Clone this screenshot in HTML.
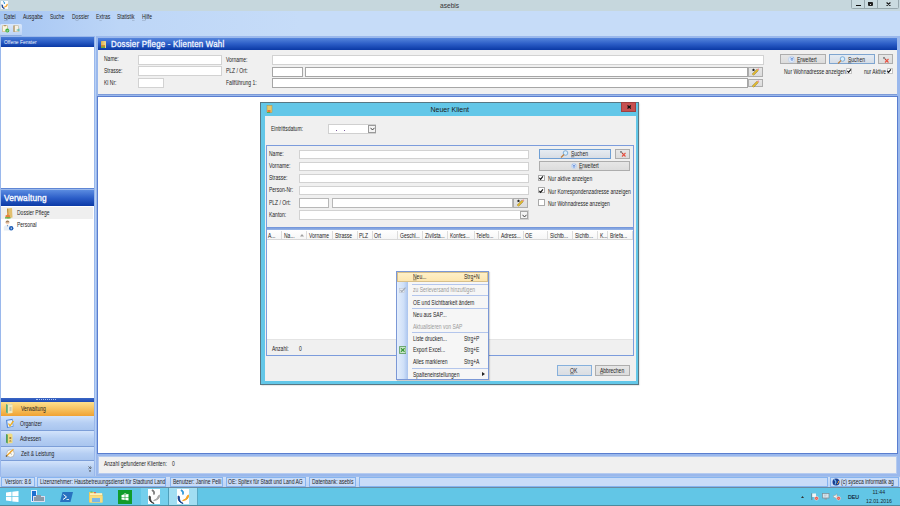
<!DOCTYPE html>
<html><head><meta charset="utf-8">
<style>
*{box-sizing:border-box}
html,body{margin:0;padding:0;width:900px;height:506px;overflow:hidden;background:#fff;font-family:"Liberation Sans",sans-serif;}
.a{position:absolute}
.t{position:absolute;font-size:6.6px;color:#1e1e1e;white-space:nowrap;line-height:1;transform:translateY(-0.7px) scaleX(0.758);transform-origin:0 0}
.s{transform:none}

u{text-decoration-thickness:1px;text-underline-offset:-0.2px;text-decoration-color:rgba(20,20,20,0.45)}
.ck{position:absolute}
.inp{position:absolute;background:#fff;border:1px solid #d2d2d2}
.btn{position:absolute;background:linear-gradient(#e6e6e6,#dcdcdc);border:1px solid #adadad}
.nb{position:absolute;left:1px;width:92.5px;background:linear-gradient(#d2e3fb,#b6cff3 50%,#a9c5ef);border-bottom:1px solid #7c9ed8}
.seg{position:absolute;top:477px;height:9.5px;background:#c9dcf8;border:1px solid #86b4f0}
.chk{position:absolute;width:6px;height:6px;background:#fff;border:1px solid #a9a9a9;border-radius:0.5px}
</style></head><body>
<!-- title bar -->
<div class="a" style="left:0;top:0;width:900px;height:11px;background:#c6d7dd"></div>
<div class="a" style="left:1px;top:1px;width:7px;height:8px;background:#fbfbfb"></div><svg class="a" style="left:1px;top:1px" width="7" height="8" viewBox="0 0 12 15"><path d="M4.3 0.8 Q7.2 2 5.8 5.6 Q6.2 2.8 3.8 1.6Z" fill="#1e8fd8" stroke="#1e8fd8" stroke-width="1.2" stroke-linejoin="round"/><path d="M11.6 6 Q11.5 11.2 5.4 11.6 Q9.5 10.4 10.3 6.6Z" fill="#f5a020" stroke="#f5a020" stroke-width="1.2" stroke-linejoin="round"/><path d="M1 7 Q0.2 13.3 6 14.5 Q1.8 12.6 2.2 7.6Z" fill="#123c8c" stroke="#123c8c" stroke-width="1.2" stroke-linejoin="round"/></svg>
<div class="t s" style="left:440px;top:2.5px;font-size:6.6px;color:#333">asebis</div>
<div class="a" style="left:851.2px;top:-1px;width:47.7px;height:9.8px;background:#cadbe0;border:1px solid #97a8ae;border-radius:0 0 1.5px 1.5px"></div>
<div class="a" style="left:864.2px;top:0;width:0.8px;height:8.5px;background:#97a8ae"></div>
<div class="a" style="left:877.2px;top:0;width:0.8px;height:8.5px;background:#97a8ae"></div>
<div class="a" style="left:856px;top:4.8px;width:4.7px;height:1.4px;background:#111"></div>
<div class="a" style="left:868px;top:2.3px;width:5px;height:4.2px;background:#222;border-radius:0 1px 1px 1px"></div>
<div class="a" style="left:870px;top:4px;width:1px;height:1px;background:#ddd"></div>
<svg class="a" style="left:885.8px;top:1.9px" width="5" height="4.4" viewBox="0 0 5 4.4"><path d="M0.6 0.5 L4.4 3.9 M4.4 0.5 L0.6 3.9" stroke="#111" stroke-width="1.1"/></svg>
<!-- menubar + toolbar -->
<div class="a" style="left:0;top:11px;width:900px;height:25px;background:linear-gradient(90deg,#a5c5f3 0,#bdd6f7 120px,#c6dcf8 300px,#c6dcf8)"></div>
<div class="t" style="left:4px;top:14.5px"><u>D</u>atei</div>
<div class="t" style="left:23px;top:14.5px">Ausgabe</div>
<div class="t" style="left:50px;top:14.5px">Suche</div>
<div class="t" style="left:72px;top:14.5px">D<u>o</u>ssier</div>
<div class="t" style="left:96px;top:14.5px">E<u>x</u>tras</div>
<div class="t" style="left:117px;top:14.5px">Statisti<u>k</u></div>
<div class="t" style="left:142px;top:14.5px"><u>H</u>ilfe</div>
<div class="a" style="left:0;top:23.5px;width:22px;height:12px;background:linear-gradient(#dce9fb,#bcd3f5);border-radius:1.5px;border-bottom:1px solid #8eaee0"></div>
<svg class="a" style="left:1.5px;top:25px" width="8" height="8" viewBox="0 0 8 8"><rect x="0.7" y="0.7" width="4.6" height="6" fill="#fbf6e0" stroke="#d0b070" stroke-width="0.6"/><rect x="2" y="0.2" width="2" height="1" fill="#b09060"/><circle cx="5.3" cy="5.6" r="2" fill="#40b040"/><path d="M4.3 5.6 L5.1 6.4 L6.3 4.9" stroke="#fff" stroke-width="0.6" fill="none"/></svg><svg class="a" style="left:12.5px;top:25px" width="8" height="8" viewBox="0 0 8 8"><rect x="0.7" y="0.7" width="4.6" height="6" fill="#f6f2e6" stroke="#c8b890" stroke-width="0.6"/><rect x="0.6" y="0.6" width="1" height="6.2" fill="#a08050"/><path d="M3 5 L6.5 3.5 L6.5 6.5Z" fill="#70c0b0"/></svg>

<!-- left panel -->
<div class="a" style="left:0;top:35.5px;width:94px;height:441px;background:#9ab8ec"></div>
<div class="a" style="left:1px;top:36.5px;width:92.5px;height:10.5px;background:linear-gradient(#4a7cd6,#2a5cc4 50%,#0a39a5)"></div>
<div class="t s" style="left:4px;top:40.9px;color:#f4f7ff;font-size:4.9px">Offene Fenster</div>
<div class="a" style="left:1px;top:47px;width:92.5px;height:140.5px;background:#fff"></div>
<div class="a" style="left:1px;top:187.5px;width:92.5px;height:1px;background:#5f86d4"></div>
<div class="a" style="left:1px;top:190px;width:92.5px;height:15.5px;background:linear-gradient(#5a8be0,#2c5ec8 50%,#0b3aa6)"></div>
<div class="t s" style="left:3.8px;top:193.5px;color:#f4f7ff;font-size:9.2px;font-weight:normal;-webkit-text-stroke:0.4px #f4f7ff;letter-spacing:0.2px;transform:scaleX(0.9);transform-origin:0 0">Verwaltung</div>
<div class="a" style="left:1px;top:205.5px;width:92.5px;height:192.5px;background:#fff"></div>
<div class="a" style="left:1px;top:207px;width:91.5px;height:11.5px;background:#efefef"></div>
<svg class="a" style="left:3.5px;top:207.5px" width="9" height="11" viewBox="0 0 9 11"><path d="M3 0.5 L8 0 L8.5 9.5 L3.5 10.5Z" fill="#e2c070"/><path d="M3 0.5 L4.2 1 L4.5 10.3 L3.5 10.5Z" fill="#b89040"/><circle cx="4" cy="5.5" r="1" fill="#f0a050"/><path d="M1.5 9.5 L1.5 7.5 Q4 6 6 7.5 L6 9.5Z" fill="#e8803a"/><path d="M1 9.3 L6.5 9.3 L6.5 10.5 L1 10.5Z" fill="#50b040"/></svg>
<div class="t" style="left:17px;top:210.5px">Dossier Pflege</div>
<svg class="a" style="left:2.5px;top:219.5px" width="11" height="11" viewBox="0 0 11 11"><circle cx="4.5" cy="2.6" r="2" fill="#f3d2b8"/><path d="M4.5 0.6 Q2.5 0.8 2.6 2.4 L6.4 2.2 Q6.4 0.7 4.5 0.6Z" fill="#a08060"/><path d="M0.8 10.5 L0.8 7.5 Q1 5 4.5 5 Q8 5 8 7.5 L8 10.5Z" fill="#e6edf5"/><path d="M4 5 L4.5 7 L5 5Z" fill="#5080c0"/><circle cx="8.2" cy="8.3" r="2.2" fill="#1a5cb8"/><rect x="7.8" y="7.5" width="0.8" height="1.8" fill="#fff"/></svg>
<div class="t" style="left:17px;top:222.5px">Personal</div>
<div class="a" style="left:1px;top:398px;width:92.5px;height:3.5px;background:linear-gradient(#3b66c4,#1c48b4)"></div>
<div class="a" style="left:36px;top:398.5px;width:20px;height:1px;border-top:1px dotted #a9c0ee"></div>
<div class="nb" style="top:401.5px;height:15px;background:linear-gradient(#fde08e,#f6c260 50%,#f0a232)"></div>
<div class="t" style="left:20.5px;top:406.5px">Verwaltung</div>
<div class="nb" style="top:416px;height:15px"></div>
<div class="t" style="left:20px;top:421.5px">Organizer</div>
<div class="nb" style="top:431px;height:15.5px"></div>
<div class="t" style="left:20px;top:436.5px">Adressen</div>
<div class="nb" style="top:446.5px;height:14.5px"></div>
<div class="t" style="left:20.5px;top:451.5px">Zeit &amp; Leistung</div>
<div class="nb" style="top:461px;height:14.5px;border-bottom:none"></div>
<svg class="a" style="left:87.5px;top:465.5px" width="4" height="6.5" viewBox="0 0 4 6.5"><path d="M0.5 0.5 L1.8 1.7 L0.5 2.9 M2 0.5 L3.3 1.7 L2 2.9" stroke="#333" stroke-width="0.7" fill="none"/><path d="M0.9 4.6 L3.1 4.6 L2 5.9Z" fill="#333"/></svg>
<!-- nav icons -->
<svg class="a" style="left:5px;top:403px" width="9" height="11" viewBox="0 0 9 11"><path d="M1 1 L6 0.5 L7.5 1.5 L7.5 10 L2.5 10.5 L1 9.5Z" fill="#f2ecc0"/><path d="M1 1 L2.8 1.8 L2.8 10.5 L1 9.5Z" fill="#5eaa78"/><path d="M4.5 4 L6.5 4 L6.5 8 L4.5 8Z" fill="#c8c8b0"/><path d="M2.8 1.8 L7.5 1.5" stroke="#b8b890" stroke-width="0.4"/></svg>
<svg class="a" style="left:4.5px;top:417.5px" width="10" height="11" viewBox="0 0 10 11"><path d="M1 2 L7.5 0.8 L8.5 8.5 L2 10Z" fill="#4f86d8"/><path d="M2.2 2.8 L7 2 L7.8 8 L3 9Z" fill="#e8f0fb"/><path d="M3.5 5.5 L5 7.8 L8.5 3" stroke="#f0b020" stroke-width="1.3" fill="none"/></svg>
<svg class="a" style="left:5px;top:432.5px" width="9" height="11" viewBox="0 0 9 11"><path d="M1 1 L6 0.5 L7.5 1.5 L7.5 10 L2.5 10.5 L1 9.5Z" fill="#f0dc80"/><path d="M1 1 L2.8 1.8 L2.8 10.5 L1 9.5Z" fill="#4e9e60"/><circle cx="5.3" cy="5" r="1.1" fill="#a07840"/><path d="M4 8.5 Q5.3 6 6.6 8.5Z" fill="#a07840"/></svg>
<svg class="a" style="left:4.5px;top:448px" width="10" height="10" viewBox="0 0 10 10"><circle cx="5.5" cy="5.5" r="3.8" fill="#fbfaf4" stroke="#a8a8a8" stroke-width="0.7"/><path d="M5.5 3 L5.5 5.5 L7 6.5" stroke="#777" stroke-width="0.5" fill="none"/><path d="M1 8.5 L8.5 1.2" stroke="#f0a830" stroke-width="1.3"/><path d="M1 8.5 L2 7.5" stroke="#555" stroke-width="1.3"/></svg>
<!-- main panel -->
<div class="a" style="left:93.5px;top:35.5px;width:806.5px;height:441.5px;background:#9ab8ec"></div>
<div class="a" style="left:95px;top:36px;width:1.2px;height:440px;background:#b8d0f4"></div>
<div class="a" style="left:97.5px;top:38px;width:799.5px;height:11.5px;background:linear-gradient(#5585dc,#2b5dc6 50%,#0a39a5)"></div>
<div class="a" style="left:100.5px;top:40.5px;width:5.5px;height:7.5px;background:linear-gradient(90deg,#d6b050,#f4dc90);border-radius:0.5px"></div>
<div class="a" style="left:101px;top:45px;width:4px;height:2.5px;background:linear-gradient(#f08030,#58b040)"></div>
<div class="t s" style="left:111px;top:40.2px;color:#eef3ff;font-size:8.9px;font-weight:normal;-webkit-text-stroke:0.35px #eef3ff;letter-spacing:0.25px;transform:scaleX(0.889);transform-origin:0 0">Dossier Pflege - Klienten Wahl</div>
<div class="a" style="left:97.5px;top:49.5px;width:799.5px;height:45px;background:#f0f0f0;border-bottom:1px solid #7d9bd8"></div>
<div class="a" style="left:97px;top:96px;width:800.5px;height:358px;background:#fff;border:1.5px solid #5a7ecf"></div>
<div class="a" style="left:97.5px;top:456px;width:799.5px;height:17.5px;background:#f0f0f0;border:1px solid #b6cbef"></div>
<div class="t" style="left:103.5px;top:462px">Anzahl gefundener Klienten:</div>
<div class="t" style="left:171.5px;top:462px">0</div>

<!-- main form -->
<div class="t" style="left:103.5px;top:56.6px">Name:</div>
<div class="t" style="left:103.5px;top:69px">Strasse:</div>
<div class="t" style="left:103.5px;top:80.5px">Kl Nr:</div>
<div class="inp" style="left:138px;top:55px;width:84px;height:9.6px"></div>
<div class="inp" style="left:138px;top:66.2px;width:84px;height:9.4px"></div>
<div class="inp" style="left:138px;top:78px;width:25.5px;height:9.5px"></div>
<div class="t" style="left:226px;top:57.5px">Vorname:</div>
<div class="t" style="left:226px;top:69px">PLZ / Ort:</div>
<div class="t" style="left:226px;top:80.5px">Fallführung 1:</div>
<div class="inp" style="left:271.5px;top:55px;width:492px;height:9.5px"></div>
<div class="inp" style="left:271.5px;top:67px;width:31px;height:9.5px;border-color:#a6a6a6"></div>
<div class="inp" style="left:305px;top:67px;width:442.5px;height:9.5px;border-color:#a6a6a6"></div>
<div class="btn" style="left:747.5px;top:67px;width:15.5px;height:9.5px"></div>
<div class="inp" style="left:271.5px;top:78px;width:476px;height:9.8px;border-color:#a6a6a6"></div>
<div class="btn" style="left:747.5px;top:78.6px;width:15.5px;height:8.6px"></div>
<svg class="a" style="left:751px;top:68px" width="9" height="8" viewBox="0 0 9 8"><path d="M1.8 6.8 L6.8 1.8" stroke="#8a7020" stroke-width="2.2"/><path d="M1.8 6.8 L6.8 1.8" stroke="#eac232" stroke-width="1.5"/><path d="M6.8 1.8 L7.8 0.8" stroke="#f08898" stroke-width="1.5"/><path d="M2.5 0.3 L3 1.4 L4.2 1.5 L3.3 2.2 L3.6 3.3 L2.5 2.7 L1.4 3.3 L1.7 2.2 L0.8 1.5 L2 1.4Z" fill="#111"/></svg>
<svg class="a" style="left:751px;top:79.5px" width="9" height="8" viewBox="0 0 9 8"><path d="M1.8 6.8 L6.8 1.8" stroke="#8a7020" stroke-width="2.2"/><path d="M1.8 6.8 L6.8 1.8" stroke="#eac232" stroke-width="1.5"/><path d="M6.8 1.8 L7.8 0.8" stroke="#f08898" stroke-width="1.5"/></svg>
<div class="btn" style="left:780px;top:54px;width:45.5px;height:10.3px"></div>
<div class="a" style="left:788px;top:55.5px;width:7px;height:7px;border-radius:50%;background:radial-gradient(#c8dcf8,#f4f8ff);border:0.5px solid #c0d4f0"></div>
<svg class="a" style="left:789.5px;top:57px" width="4" height="4" viewBox="0 0 4 4"><path d="M0.6 0.6 L2 1.8 L3.4 0.6 M0.6 2.2 L2 3.4 L3.4 2.2" stroke="#3a6cc8" stroke-width="0.7" fill="none"/></svg>
<div class="t" style="left:797px;top:57.6px"><u>E</u>rweitert</div>
<div class="btn" style="left:829px;top:54px;width:45.5px;height:10.3px;border-color:#7fa5cf;background:linear-gradient(#e4ebf3,#d6dde6)"></div>
<svg class="a" style="left:837px;top:55.5px" width="9" height="8" viewBox="0 0 9 8"><circle cx="5.5" cy="3" r="2.3" fill="#d8eefc" stroke="#6aa0d0" stroke-width="0.8"/><path d="M4 4.5 L1 7.5" stroke="#c08040" stroke-width="1.3"/></svg>
<div class="t" style="left:847.5px;top:57.6px"><u>S</u>uchen</div>
<div class="btn" style="left:878.4px;top:54px;width:14.6px;height:10.3px"></div>
<svg class="a" style="left:882px;top:55.5px" width="8" height="8" viewBox="0 0 8 8"><path d="M3 3 L6.5 6.5 M6.5 3 L3 6.5" stroke="#e85040" stroke-width="1.1"/><path d="M1.5 1 L3.5 3.5 M1 2.5 L2.5 1.5" stroke="#333" stroke-width="0.6"/></svg>
<div class="t" style="left:784px;top:70.2px">Nur Wohnadresse anzeigen</div>
<div class="chk" style="left:846px;top:67.7px;border-color:#c4c4c4"></div>
<svg class="ck" style="left:846.3px;top:67.8px" width="6" height="6" viewBox="0 0 6 6"><path d="M1.4 2.9 L2.6 4.3 L4.9 1.3" stroke="#151515" stroke-width="1.2" fill="none"/></svg>
<div class="t" style="left:863.5px;top:70.2px">nur Aktive</div>
<div class="chk" style="left:886.5px;top:67.7px;border-color:#c4c4c4"></div>
<svg class="ck" style="left:886.3px;top:67.8px" width="6" height="6" viewBox="0 0 6 6"><path d="M1.4 2.9 L2.6 4.3 L4.9 1.3" stroke="#151515" stroke-width="1.2" fill="none"/></svg>

<!-- dialog -->
<div class="a" style="left:260.3px;top:101.8px;width:378.7px;height:282.8px;background:#63c7e8;border:1px solid #587884;box-shadow:0.5px 0.5px 1.5px rgba(0,0,0,0.25)"></div>
<svg class="a" style="left:266px;top:105px" width="7" height="8" viewBox="0 0 7 8"><rect x="1" y="0.5" width="5" height="7" fill="#e8c868" stroke="#b89040" stroke-width="0.5"/><rect x="1.5" y="5" width="3" height="2.5" fill="#e87838"/><rect x="1" y="7" width="3" height="1" fill="#58b048"/></svg>
<div class="t s" style="left:430.5px;top:105.5px;font-size:7px;color:#1a1a1a">Neuer Klient</div>
<div class="a" style="left:620.7px;top:102.3px;width:15.8px;height:9.3px;background:#c75050;border:0.6px solid #a04040"></div>
<svg class="a" style="left:626.8px;top:105px" width="4.4" height="4" viewBox="0 0 4.4 4"><path d="M0.5 0.5 L3.9 3.5 M3.9 0.5 L0.5 3.5" stroke="#111" stroke-width="1.2"/></svg>
<div class="a" style="left:264.5px;top:116px;width:371px;height:265px;background:#f0f0f0"></div>
<div class="t" style="left:271px;top:127px">Eintrittsdatum:</div>
<div class="inp" style="left:328px;top:124px;width:48.2px;height:9.7px;border-color:#d0d0d0"></div>
<div class="a" style="left:336px;top:130px;width:0.8px;height:0.8px;background:#8060a0"></div><div class="a" style="left:344.3px;top:130px;width:0.8px;height:0.8px;background:#8060a0"></div>
<div class="a" style="left:367.5px;top:124.5px;width:8.5px;height:8.5px;background:#f4f4f4;border:1px solid #9a9a9a"></div>
<svg class="a" style="left:369.5px;top:127px" width="5" height="4" viewBox="0 0 5 4"><path d="M0.5 0.8 L2.5 3 L4.5 0.8" stroke="#333" stroke-width="0.9" fill="none"/></svg>

<!-- group panel -->
<div class="a" style="left:266.3px;top:145.2px;width:367.6px;height:211.2px;background:#f0f0f0;border:1px solid #7c9cdc"></div>
<div class="t" style="left:269px;top:151.7px">Name:</div>
<div class="t" style="left:269px;top:164px">Vorname:</div>
<div class="t" style="left:269px;top:176.1px">Strasse:</div>
<div class="t" style="left:269px;top:188.3px">Person-Nr:</div>
<div class="t" style="left:269px;top:200.5px">PLZ / Ort:</div>
<div class="t" style="left:269px;top:212.7px">Kanton:</div>
<div class="inp" style="left:299px;top:150px;width:229.7px;height:9px;border-color:#d2d2d2"></div>
<div class="inp" style="left:299px;top:161.6px;width:229.7px;height:9.6px;border-color:#d2d2d2"></div>
<div class="inp" style="left:299px;top:174px;width:229.7px;height:9px;border-color:#d2d2d2"></div>
<div class="inp" style="left:299px;top:186.2px;width:229.7px;height:9.1px;border-color:#d2d2d2"></div>
<div class="inp" style="left:299px;top:198.2px;width:29.8px;height:9.6px;border-color:#b8b8b8"></div>
<div class="inp" style="left:331.5px;top:198.2px;width:181.7px;height:9.6px;border-color:#b8b8b8"></div>
<div class="btn" style="left:513.2px;top:198.2px;width:14.6px;height:9.6px"></div>
<svg class="a" style="left:516px;top:199.2px" width="9" height="8" viewBox="0 0 9 8"><path d="M1.8 6.8 L6.8 1.8" stroke="#8a7020" stroke-width="2.2"/><path d="M1.8 6.8 L6.8 1.8" stroke="#eac232" stroke-width="1.5"/><path d="M6.8 1.8 L7.8 0.8" stroke="#f08898" stroke-width="1.5"/><path d="M2.5 0.3 L3 1.4 L4.2 1.5 L3.3 2.2 L3.6 3.3 L2.5 2.7 L1.4 3.3 L1.7 2.2 L0.8 1.5 L2 1.4Z" fill="#111"/></svg>
<div class="inp" style="left:299px;top:210.2px;width:229.7px;height:9.6px;border-color:#d2d2d2"></div>
<div class="a" style="left:520.3px;top:211.3px;width:7.7px;height:7.7px;background:#f4f4f4;border:1px solid #a8a8a8"></div>
<svg class="a" style="left:521.8px;top:213.5px" width="5" height="4" viewBox="0 0 5 4"><path d="M0.5 0.8 L2.5 3 L4.5 0.8" stroke="#333" stroke-width="0.9" fill="none"/></svg>

<div class="btn" style="left:539px;top:149px;width:72px;height:9.7px;border-color:#6f9fd4;background:linear-gradient(#e6ecf2,#d8dde4)"></div>
<svg class="a" style="left:560px;top:149.8px" width="9" height="8" viewBox="0 0 9 8"><circle cx="5.5" cy="3" r="2.3" fill="#d8eefc" stroke="#6aa0d0" stroke-width="0.8"/><path d="M4 4.5 L1 7.5" stroke="#c08040" stroke-width="1.3"/></svg>
<div class="t" style="left:570.5px;top:152px"><u>S</u>uchen</div>
<div class="btn" style="left:615px;top:149px;width:14.7px;height:9.7px"></div>
<svg class="a" style="left:618.5px;top:150px" width="8" height="8" viewBox="0 0 8 8"><path d="M3 3 L6.5 6.5 M6.5 3 L3 6.5" stroke="#e85040" stroke-width="1.1"/><path d="M1.5 1 L3.5 3.5 M1 2.5 L2.5 1.5" stroke="#333" stroke-width="0.6"/></svg>
<div class="btn" style="left:539px;top:161px;width:90.7px;height:9.8px"></div>
<div class="a" style="left:570.5px;top:162.5px;width:6.5px;height:6.5px;border-radius:50%;background:radial-gradient(#c8dcf8,#f4f8ff);border:0.5px solid #c0d4f0"></div>
<svg class="a" style="left:571.8px;top:163.8px" width="4" height="4" viewBox="0 0 4 4"><path d="M0.6 0.6 L2 1.8 L3.4 0.6 M0.6 2.2 L2 3.4 L3.4 2.2" stroke="#3a6cc8" stroke-width="0.7" fill="none"/></svg>
<div class="t" style="left:579px;top:164.2px"><u>E</u>rweitert</div>
<div class="chk" style="left:538px;top:174.5px;width:6.8px;height:6.6px"></div>
<svg class="ck" style="left:538.3px;top:175.10000000000002px" width="6" height="6" viewBox="0 0 6 6"><path d="M1.4 2.9 L2.6 4.3 L4.9 1.3" stroke="#151515" stroke-width="1.2" fill="none"/></svg>
<div class="t" style="left:547.9px;top:177.1px">Nur aktive anzeigen</div>
<div class="chk" style="left:538px;top:186.9px;width:6.8px;height:6.4px"></div>
<svg class="ck" style="left:538.3px;top:187.5px" width="6" height="6" viewBox="0 0 6 6"><path d="M1.4 2.9 L2.6 4.3 L4.9 1.3" stroke="#151515" stroke-width="1.2" fill="none"/></svg>
<div class="t" style="left:547.9px;top:189.5px">Nur Korrespondenzadresse anzeigen</div>
<div class="chk" style="left:538px;top:199px;width:6.8px;height:6.6px"></div>
<div class="t" style="left:547.9px;top:201.8px">Nur Wohnadresse anzeigen</div>

<div class="a" style="left:267.3px;top:227px;width:365.6px;height:3.5px;background:linear-gradient(#6f92d8,#a9c4ee)"></div>
<div class="a" style="left:267.3px;top:230.5px;width:365.6px;height:109px;background:#fff"></div>
<div class="a" style="left:267.3px;top:230.4px;width:365.4px;height:9.2px;background:linear-gradient(#ffffff,#f6f6f6);border-bottom:1px solid #d8d8d8"></div>

<div class="a" style="left:280.9px;top:230.8px;width:1px;height:8.4px;background:#dcdcdc"></div>
<div class="a" style="left:305.8px;top:230.8px;width:1px;height:8.4px;background:#dcdcdc"></div>
<div class="a" style="left:331.6px;top:230.8px;width:1px;height:8.4px;background:#dcdcdc"></div>
<div class="a" style="left:356.5px;top:230.8px;width:1px;height:8.4px;background:#dcdcdc"></div>
<div class="a" style="left:371.7px;top:230.8px;width:1px;height:8.4px;background:#dcdcdc"></div>
<div class="a" style="left:396.6px;top:230.8px;width:1px;height:8.4px;background:#dcdcdc"></div>
<div class="a" style="left:421.9px;top:230.8px;width:1px;height:8.4px;background:#dcdcdc"></div>
<div class="a" style="left:446.9px;top:230.8px;width:1px;height:8.4px;background:#dcdcdc"></div>
<div class="a" style="left:473.8px;top:230.8px;width:1px;height:8.4px;background:#dcdcdc"></div>
<div class="a" style="left:498.2px;top:230.8px;width:1px;height:8.4px;background:#dcdcdc"></div>
<div class="a" style="left:522.5px;top:230.8px;width:1px;height:8.4px;background:#dcdcdc"></div>
<div class="a" style="left:547.4px;top:230.8px;width:1px;height:8.4px;background:#dcdcdc"></div>
<div class="a" style="left:572.3px;top:230.8px;width:1px;height:8.4px;background:#dcdcdc"></div>
<div class="a" style="left:597.3px;top:230.8px;width:1px;height:8.4px;background:#dcdcdc"></div>
<div class="a" style="left:607.0px;top:230.8px;width:1px;height:8.4px;background:#dcdcdc"></div>
<div class="a" style="left:631.9px;top:230.8px;width:1px;height:8.4px;background:#dcdcdc"></div>
<div class="t" style="left:268px;top:234.3px">A...</div>
<div class="t" style="left:284px;top:234.3px">Na...</div>
<div class="t" style="left:309px;top:234.3px">Vorname</div>
<div class="t" style="left:334.5px;top:234.3px">Strasse</div>
<div class="t" style="left:359px;top:234.3px">PLZ</div>
<div class="t" style="left:374px;top:234.3px">Ort</div>
<div class="t" style="left:399.5px;top:234.3px">Geschl...</div>
<div class="t" style="left:424.5px;top:234.3px">Zivilsta...</div>
<div class="t" style="left:450px;top:234.3px">Konfes...</div>
<div class="t" style="left:476px;top:234.3px">Telefo...</div>
<div class="t" style="left:501px;top:234.3px">Adress...</div>
<div class="t" style="left:525px;top:234.3px">OE</div>
<div class="t" style="left:550px;top:234.3px">Sichtb...</div>
<div class="t" style="left:575px;top:234.3px">Sichtb...</div>
<div class="t" style="left:600px;top:234.3px">K...</div>
<div class="t" style="left:610px;top:234.3px">Briefa...</div>
<svg class="a" style="left:299.5px;top:234px" width="4" height="2.5" viewBox="0 0 4 2.5"><path d="M0 2.5 L2 0 L4 2.5Z" fill="#a0a0a0"/></svg>
<div class="a" style="left:267.3px;top:339.3px;width:365.6px;height:16.1px;background:#f0f0f0;border-top:1px solid #e4e4e4"></div>
<div class="t" style="left:272.2px;top:346.5px">Anzahl:</div>
<div class="t" style="left:299px;top:346.5px">0</div>

<div class="btn" style="left:557.2px;top:365.3px;width:34.4px;height:10.6px;border-color:#86b0dc;background:linear-gradient(#e4e8ec,#dadde2)"></div>
<div class="t" style="left:570px;top:369.2px"><u>O</u>K</div>
<div class="btn" style="left:595.2px;top:365.3px;width:34.4px;height:10.6px"></div>
<div class="t" style="left:600px;top:369.2px"><u>A</u>bbrechen</div>

<!-- context menu -->
<div class="a" style="left:396.4px;top:270.9px;width:92.7px;height:109.4px;background:#f6f6f6;border:1px solid #7b98d6;box-shadow:1px 1px 1px rgba(0,0,0,0.15)"></div>
<div class="a" style="left:397.4px;top:271.9px;width:10.6px;height:107.4px;background:linear-gradient(90deg,#e4eefc,#cfe0f8 60%,#aac4ee)"></div>
<div class="a" style="left:397.4px;top:272.1px;width:90.7px;height:9.5px;background:linear-gradient(#fef0c8,#fde6b0);border:1px solid #d8c08a"></div>
<div class="t" style="left:412.5px;top:275.4px"><u>N</u>eu...</div>
<div class="t" style="left:464px;top:275.4px">Strg+N</div>
<svg class="a" style="left:399.3px;top:286.5px" width="7" height="6" viewBox="0 0 7 6"><rect x="0.5" y="1.5" width="5" height="4" fill="#e6eaf0" stroke="#b8c0cc" stroke-width="0.5"/><path d="M1.5 3.2 L2.8 4.6 L6.5 0.6" stroke="#a0a8b4" stroke-width="1.1" fill="none"/></svg>
<div class="t" style="left:412.5px;top:288.0px;color:#9a9a9a">zu Serieversand hinzufügen</div>
<div class="t" style="left:412.5px;top:300.8px">OE und Sichtbarkeit ändern</div>
<div class="t" style="left:412.5px;top:313.4px">Neu aus SAP...</div>
<div class="t" style="left:412.5px;top:324.5px;color:#9a9a9a">Aktualisieren von SAP</div>
<div class="t" style="left:412.5px;top:337.1px">Liste drucken...</div>
<div class="t" style="left:464px;top:337.1px">Strg+P</div>
<svg class="a" style="left:398.8px;top:346px" width="7.6" height="8" viewBox="0 0 7.6 8"><rect x="0.3" y="0.3" width="7" height="7.4" rx="0.6" fill="#6ab06a" stroke="#4a8a4a" stroke-width="0.5"/><rect x="1.2" y="1.2" width="5.2" height="5.6" fill="#e8f4e8"/><path d="M2 2.2 L5.6 5.8 M5.6 2.2 L2 5.8" stroke="#3a9a3a" stroke-width="1.4"/></svg>
<div class="t" style="left:412.5px;top:348.2px">Export Excel...</div>
<div class="t" style="left:464px;top:348.2px">Strg+E</div>
<div class="t" style="left:412.5px;top:359.6px">Alles markieren</div>
<div class="t" style="left:464px;top:359.6px">Strg+A</div>
<div class="t" style="left:412.5px;top:372.6px">Spalteneinstellungen</div>
<svg class="a" style="left:482px;top:372.2px" width="3" height="4" viewBox="0 0 3 4"><path d="M0 0 L3 2 L0 4Z" fill="#222"/></svg>
<div class="a" style="left:411.5px;top:284px;width:76.5px;height:1px;background:#b4c6ec"></div>
<div class="a" style="left:411.5px;top:295.3px;width:76.5px;height:1px;background:#b4c6ec"></div>
<div class="a" style="left:411.5px;top:308.1px;width:76.5px;height:1px;background:#b4c6ec"></div>
<div class="a" style="left:411.5px;top:332.1px;width:76.5px;height:1px;background:#b4c6ec"></div>
<div class="a" style="left:411.5px;top:367.7px;width:76.5px;height:1px;background:#b4c6ec"></div>

<!-- status bar -->
<div class="a" style="left:0;top:476px;width:900px;height:11px;background:linear-gradient(#cfe0f9,#bcd3f5);border-top:1px solid #a4bfea"></div>
<div class="seg" style="left:1.2px;width:33.8px"></div>
<div class="t" style="left:4.5px;top:480.2px">Version: 8.6</div>
<div class="seg" style="left:37px;width:129px"></div>
<div class="t" style="left:40px;top:480.2px">Lizenznehmer: Hausbetreuungsdienst für Stadtund Land</div>
<div class="seg" style="left:170px;width:52.5px"></div>
<div class="t" style="left:173px;top:480.2px">Benutzer: Janine Pelli</div>
<div class="seg" style="left:226.2px;width:79.8px"></div>
<div class="t" style="left:227.5px;top:480.2px">OE: Spitex für Stadt und Land AG</div>
<div class="seg" style="left:308.7px;width:47.3px"></div>
<div class="t" style="left:311.5px;top:480.2px">Datenbank: asebis</div>
<div class="seg" style="left:358.7px;width:469.3px"></div>
<div class="seg" style="left:830px;width:68.8px"></div>
<svg class="a" style="left:831.5px;top:478px" width="8" height="8" viewBox="0 0 8 8"><circle cx="4" cy="4" r="3.5" fill="#1a3d8f"/><path d="M2 1.5 Q5 3 3 6.5" stroke="#6fb2e8" stroke-width="1.3" fill="none"/><path d="M5 6 Q7 5 6.5 3" stroke="#e8a040" stroke-width="1" fill="none"/></svg>
<div class="t" style="left:841px;top:480.2px">(c) syseca informatik ag</div>

<!-- taskbar -->
<div class="a" style="left:0;top:487px;width:900px;height:19px;background:#62c6e6;border-top:1px solid #6a8aa0"></div>
<div class="a" style="left:0;top:505px;width:900px;height:1px;background:#4d8a9c"></div>
<div class="a" style="left:141px;top:488px;width:28px;height:17px;background:#74cfec;border-right:1px solid #4f9fba"></div>
<div class="a" style="left:169px;top:488px;width:28.5px;height:17px;background:#a2def2;border-right:1px solid #58a8c4"></div>
<!-- windows logo -->
<svg class="a" style="left:5.5px;top:490.5px" width="13" height="11" viewBox="0 0 13 11"><path d="M0 1.5 L5.5 0.8 L5.5 5.2 L0 5.2Z M6.3 0.7 L12.5 0 L12.5 5.2 L6.3 5.2Z M0 5.9 L5.5 5.9 L5.5 10.3 L0 9.6Z M6.3 5.9 L12.5 5.9 L12.5 11 L6.3 10.4Z" fill="#fff"/></svg>
<!-- server manager -->
<div class="a" style="left:31px;top:489.5px;width:6px;height:12px;background:#1e6fd0;border:0.6px solid #e0f0ff"></div>
<div class="a" style="left:33px;top:496px;width:12px;height:6px;background:#8a9aa8;border:0.6px solid #dde"></div>
<div class="a" style="left:36px;top:495px;width:5px;height:1.5px;background:#8a9aa8"></div>
<!-- powershell -->
<svg class="a" style="left:60px;top:491.5px" width="13" height="10" viewBox="0 0 13 10"><path d="M2.5 0 L13 0 L10.5 10 L0 10Z" fill="#2872c0"/><path d="M3.5 2.5 L6.5 5 L3 7.5" stroke="#fff" stroke-width="1" fill="none"/><path d="M6.5 7.5 L9 7.5" stroke="#fff" stroke-width="0.8"/></svg>
<!-- explorer -->
<svg class="a" style="left:88.5px;top:491px" width="14" height="12" viewBox="0 0 14 12"><path d="M0 1 L5 1 L6 2.5 L13.5 2.5 L13.5 11.5 L0 11.5Z" fill="#f2cc5c"/><rect x="1" y="2.2" width="12" height="2" fill="#fdf0c0"/><rect x="1" y="5" width="12.5" height="6.5" fill="#f8dc80"/><rect x="3" y="7" width="8" height="4" fill="#7ab8e8"/><rect x="1.5" y="0.5" width="2" height="1" fill="#5cb850"/><rect x="5" y="1.2" width="2" height="1" fill="#e85040"/></svg>
<!-- store -->
<div class="a" style="left:118px;top:489.5px;width:14px;height:14px;background:#119c2b"></div>
<svg class="a" style="left:121px;top:492.5px" width="8" height="8" viewBox="0 0 8 8"><path d="M0.5 2 L3.7 1.6 L3.7 4 L0.5 4Z M4.3 1.5 L7.5 1 L7.5 4 L4.3 4Z M0.5 4.5 L3.7 4.5 L3.7 6.9 L0.5 6.5Z M4.3 4.5 L7.5 4.5 L7.5 7.5 L4.3 7Z" fill="#fff"/><path d="M2.5 1.6 Q4 -0.3 5.5 1.2" stroke="#fff" stroke-width="0.7" fill="none"/></svg>
<!-- asebis logos -->
<div class="a" style="left:148px;top:489px;width:12.3px;height:15px;background:#fdfdfd"></div>
<svg class="a" style="left:148px;top:489px" width="12.3" height="15" viewBox="0 0 12 15"><path d="M4.3 0.8 Q7.2 2 5.8 5.6 Q6.2 2.8 3.8 1.6Z" fill="#707070" stroke="#707070" stroke-width="0.9" stroke-linejoin="round"/><path d="M11.6 6 Q11.5 11.2 5.4 11.6 Q9.5 10.4 10.3 6.6Z" fill="#a8a8a8" stroke="#a8a8a8" stroke-width="0.9" stroke-linejoin="round"/><path d="M1 7 Q0.2 13.3 6 14.5 Q1.8 12.6 2.2 7.6Z" fill="#3a3a3a" stroke="#3a3a3a" stroke-width="0.9" stroke-linejoin="round"/></svg>
<div class="a" style="left:177px;top:489px;width:12.3px;height:15px;background:#fdfdfd"></div>
<svg class="a" style="left:177px;top:489px" width="12.3" height="15" viewBox="0 0 12 15"><path d="M4.3 0.8 Q7.2 2 5.8 5.6 Q6.2 2.8 3.8 1.6Z" fill="#1e8fd8" stroke="#1e8fd8" stroke-width="0.9" stroke-linejoin="round"/><path d="M11.6 6 Q11.5 11.2 5.4 11.6 Q9.5 10.4 10.3 6.6Z" fill="#f5a020" stroke="#f5a020" stroke-width="0.9" stroke-linejoin="round"/><path d="M1 7 Q0.2 13.3 6 14.5 Q1.8 12.6 2.2 7.6Z" fill="#123c8c" stroke="#123c8c" stroke-width="0.9" stroke-linejoin="round"/></svg>
<!-- tray -->
<svg class="a" style="left:801px;top:496px" width="3" height="2" viewBox="0 0 3 2"><path d="M0 2 L1.5 0 L3 2Z" fill="#333"/></svg>
<svg class="a" style="left:810.5px;top:493px" width="8" height="8" viewBox="0 0 8 8"><path d="M0.8 0.3 L0.8 7" stroke="#666" stroke-width="0.7"/><path d="M1.2 0.5 L5 0.5 L5 4 L1.2 4Z" fill="#f4f4f4"/><circle cx="5.5" cy="5.3" r="1.9" fill="#e84a3a" stroke="#fff" stroke-width="0.5"/><path d="M4.7 5.3 L6.3 5.3" stroke="#fff" stroke-width="0.5"/></svg>
<svg class="a" style="left:822px;top:493px" width="8" height="8" viewBox="0 0 8 8"><rect x="0.5" y="0.5" width="6.5" height="4.5" fill="#d8e4ea" stroke="#7a8a94" stroke-width="0.7"/><rect x="2.5" y="5" width="2.5" height="1.5" fill="#8a9aa4"/><path d="M2 2 L5 2 M2 3 L4 3" stroke="#9ab" stroke-width="0.4"/></svg>
<svg class="a" style="left:833px;top:493px" width="8" height="8" viewBox="0 0 8 8"><path d="M0.5 2.5 L2 2.5 L4 0.8 L4 6.2 L2 4.5 L0.5 4.5Z" fill="#f0f0f0" stroke="#888" stroke-width="0.4"/><circle cx="5.6" cy="5.3" r="1.9" fill="#e84a3a" stroke="#fff" stroke-width="0.5"/><path d="M4.8 5.3 L6.4 5.3" stroke="#fff" stroke-width="0.5"/></svg>
<div class="t s" style="left:848px;top:494.6px;font-size:5.2px;color:#102030;-webkit-text-stroke-width:0.15px">DEU</div>
<div class="t s" style="left:872.5px;top:489.5px;font-size:5.2px;color:#1a2a30">11:44</div>
<div class="t s" style="left:866px;top:498.5px;font-size:5.2px;color:#1a2a30">12.01.2016</div>

</body></html>
